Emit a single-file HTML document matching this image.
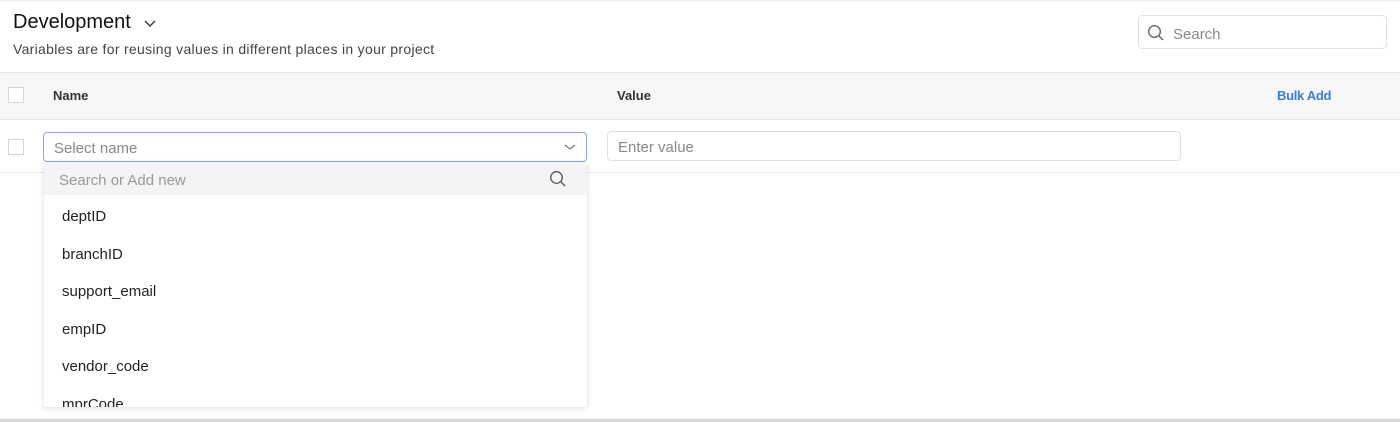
<!DOCTYPE html>
<html><head><style>
*{box-sizing:border-box;margin:0;padding:0}
body{width:1400px;height:422px;background:#fff;font-family:"Liberation Sans",sans-serif;position:relative;overflow:hidden;color:#222}
.a{position:absolute}
</style></head><body>
<div class="a" style="left:0;top:0;width:1400px;height:2px;background:#f2f2f2"></div>
<div class="a" style="left:13px;top:11px;font-size:20px;color:#111">Development</div>
<svg class="a" style="left:143px;top:18px" width="14" height="10"><path d="M2 3l5 5 5-5" fill="none" stroke="#333" stroke-width="1.4"/></svg>
<div class="a" style="left:13px;top:41px;font-size:14px;color:#444;letter-spacing:0.3px">Variables are for reusing values in different places in your project</div>
<div class="a" style="left:1138px;top:15px;width:249px;height:34px;border:1px solid #e2e2e2;border-radius:4px"></div>
<svg class="a" style="left:1147px;top:24px" width="18" height="18"><circle cx="7.5" cy="7.5" r="5.8" fill="none" stroke="#666" stroke-width="1.4"/><path d="M12 12l4 4" stroke="#666" stroke-width="1.4"/></svg>
<div class="a" style="left:1173px;top:26px;font-size:15px;color:#888">Search</div>
<div class="a" style="left:0;top:72px;width:1400px;height:48px;background:#f6f7f9;border-top:1px solid #e6e6e6;border-bottom:1px solid #e6e6e6"></div>
<div class="a" style="left:8px;top:87px;width:16px;height:16px;border:1px solid #d6d6d6;background:#fff"></div>
<div class="a" style="left:53px;top:88px;font-size:13px;font-weight:bold;color:#333">Name</div>
<div class="a" style="left:617px;top:88px;font-size:13px;font-weight:bold;color:#333">Value</div>
<div class="a" style="left:1277px;top:88px;font-size:13px;font-weight:bold;color:#3a7be0;letter-spacing:-0.3px">Bulk Add</div>
<div class="a" style="left:0;top:172px;width:1400px;height:1px;background:#e6e6e6"></div>
<div class="a" style="left:8px;top:139px;width:16px;height:16px;border:1px solid #d6d6d6"></div>
<div class="a" style="left:43px;top:132px;width:544px;height:30px;border:1px solid #8fa6e8;border-radius:4px"></div>
<div class="a" style="left:54px;top:140px;font-size:15px;color:#888">Select name</div>
<svg class="a" style="left:564px;top:143px" width="12" height="8"><path d="M1 2l5 4 5-4" fill="none" stroke="#777" stroke-width="1.2"/></svg>
<div class="a" style="left:607px;top:131px;width:574px;height:30px;border:1px solid #e0e0e0;border-radius:4px"></div>
<div class="a" style="left:618px;top:139px;font-size:15px;color:#888">Enter value</div>
<div class="a" style="left:44px;top:162px;width:543px;height:245px;background:#fff;box-shadow:0 1px 5px rgba(0,0,0,.15);overflow:hidden">
<div style="height:33px;background:#f4f4f4;margin:0 0 0 0"></div>
<div class="a" style="left:15px;top:10px;font-size:15px;color:#999">Search or Add new</div>
<svg class="a" style="left:505px;top:8px" width="18" height="18"><circle cx="7.5" cy="7.5" r="5.8" fill="none" stroke="#555" stroke-width="1.3"/><path d="M12 12l4 4" stroke="#555" stroke-width="1.3"/></svg>
<div class="a" style="left:18px;top:46px;font-size:15px;line-height:18px;color:#222">deptID</div>
<div class="a" style="left:18px;top:84px;font-size:15px;line-height:18px;color:#222">branchID</div>
<div class="a" style="left:18px;top:121px;font-size:15px;line-height:18px;color:#222">support_email</div>
<div class="a" style="left:18px;top:159px;font-size:15px;line-height:18px;color:#222">empID</div>
<div class="a" style="left:18px;top:196px;font-size:15px;line-height:18px;color:#222">vendor_code</div>
<div class="a" style="left:18px;top:234px;font-size:15px;line-height:18px;color:#222">mprCode</div>
</div>
<div class="a" style="left:0;top:419px;width:1400px;height:3px;background:#d8d8d8"></div>
</body></html>
